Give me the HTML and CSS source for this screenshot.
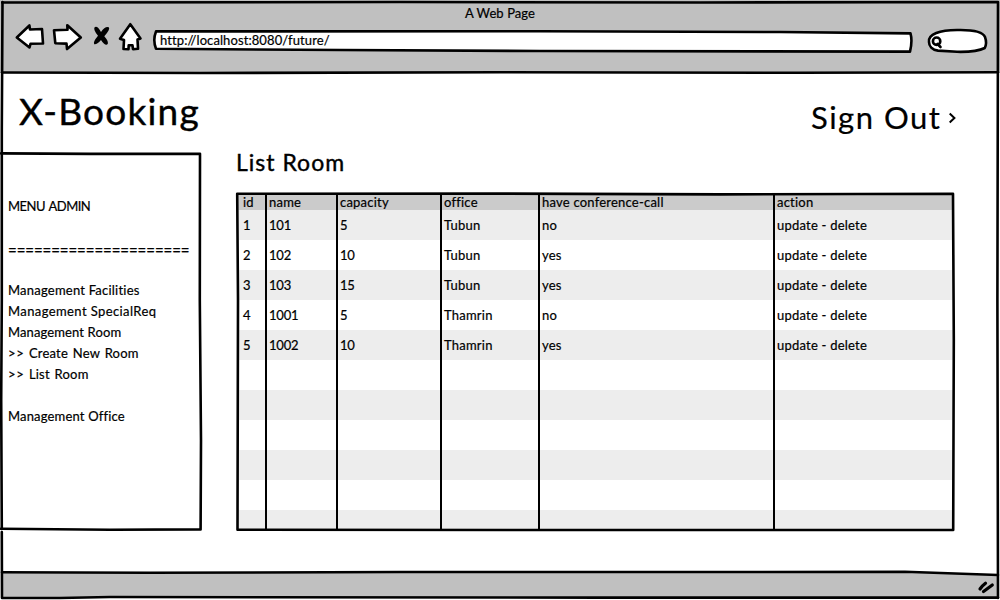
FILE: index.html
```html
<!DOCTYPE html>
<html lang="en">
<head>
<meta charset="utf-8">
<title>A Web Page</title>
<link rel="stylesheet" href="styles.css">
</head>
<body>
<div class="window">
  <header class="chrome">
    <div class="chrome-title">A Web Page</div>
    <div class="toolbar">
      <svg class="nav" width="146" height="40" viewBox="0 20 146 40">
        <g class="ink fill-white">
          <path d="M16.8 37.5L29.4 25.5L30 29.5L42 29L43 43.5L30.5 43.8L29.5 47.5Z"/>
          <path d="M54 30.2L67.5 29.8L67.3 25.2L80.8 37.5L67 49L66.5 43.6L55.3 43.2Z"/>
          <path d="M130.3 24.2L140.5 38.5L137.5 39.5L138 48.8L133 49.2L132.5 45.3L128.7 45.3L128.5 49.2L123.5 49L124 40L120 38.7Z"/>
        </g>
        <path class="cross" d="M94.6 27.2Q97.5 25.5 101 32Q105 26 108.8 27.2Q110.6 29 104.3 36.3Q109.8 42.5 107.2 44.6Q104.5 45.6 101 40Q96.5 45 94.2 44.2Q92.8 42 98 35.8Q93 29.5 94.6 27.2Z"/>
      </svg>
      <div class="address">
        <svg class="backdrop" width="762" height="26" viewBox="152 28 762 26"><path class="ink fill-white" d="M156 31.4L540 31.3L780 32L910.5 33.4Q912.6 41 910 51.6L540 51L340 50L156 48.8Q152.6 40 156 31.4Z"/></svg>
        <span class="url">http://localhost:8080/future/</span>
      </div>
      <svg class="search" width="64" height="28" viewBox="926 27 64 28">
        <path class="ink fill-white" d="M929 42C928 34 940 30.2 957 30C973 29.6 983 32 985 37Q987.2 43 984.8 48C978 51.5 966 52 957 51.8L938 50.6C932 50 929 46 929 42Z"/>
        <circle class="ink fill-none" cx="936.6" cy="41.2" r="3.7"/><path class="ink fill-none" d="M937.5 44L940.5 47"/>
      </svg>
    </div>
  </header>

  <main class="page">
    <aside class="side">
      <h1 class="brand">X-Booking</h1>
      <nav class="menu">
        <div class="caps">MENU ADMIN</div>
        <div class="rule">=====================</div>
        <div>Management Facilities</div>
        <div class="wide">Management SpecialReq</div>
        <div class="tight">Management Room</div>
        <div class="sub">&gt;&gt; Create New Room</div>
        <div class="sub">&gt;&gt; List Room</div>
        <div class="apart">Management Office</div>
      </nav>
    </aside>
    <section class="content">
      <div class="signout"><span>Sign Out</span><svg width="10" height="14" viewBox="947 111 10 14"><path class="chevron" d="M949.7 113.6L954.4 118L949.7 122.4"/></svg></div>
      <h2 class="heading">List Room</h2>
      <div class="table">
        <div class="row head"><span>id</span><span>name</span><span>capacity</span><span>office</span><span>have conference-call</span><span>action</span></div>
        <div class="row"><span>1</span><span>101</span><span>5</span><span>Tubun</span><span>no</span><span>update - delete</span></div>
        <div class="row"><span>2</span><span>102</span><span>10</span><span>Tubun</span><span>yes</span><span>update - delete</span></div>
        <div class="row"><span>3</span><span>103</span><span>15</span><span>Tubun</span><span>yes</span><span>update - delete</span></div>
        <div class="row"><span>4</span><span>1001</span><span>5</span><span>Thamrin</span><span>no</span><span>update - delete</span></div>
        <div class="row"><span>5</span><span>1002</span><span>10</span><span>Thamrin</span><span>yes</span><span>update - delete</span></div>
        <div class="row"></div><div class="row"></div><div class="row"></div><div class="row"></div><div class="row"></div><div class="row last"></div>
      </div>
    </section>
  </main>

  <svg class="sketch" width="1000" height="600" viewBox="0 0 1000 600">
    <path class="status" d="M2 572.5L400 572.5L700 571.8L900 571.8L998 575V598L2 598Z"/>
    <g class="ink fill-none">
      <path d="M2.2 2.5L400 2L700 2.5L998 2L997.4 300L998 598"/>
      <path d="M2.5 2L1.8 130L1.8 300L1.2 400L1.8 529"/>
      <path d="M1.8 532L2 598L60 598L110 597L600 597.6L998 597.6"/>
      <path d="M2 72.5L200 73L500 72.3L800 72.8L998 72.3"/>
      <path d="M2 572.3L150 572.8L400 572L700 572L905 571.8L998 575"/>
      <path d="M1 153.4L90 153.9L200 153.8L199.8 300L201 440L200.6 529.4L110 529.8L1 528.8"/>
      <path d="M237.2 193.8L500 193.6L720 194.4L953 193.8L953.8 340L953.2 530L600 530L237.5 529.8L238 300L237.2 193.8"/>
      <path class="column" d="M266 195V530M337 195V530M441 195V530M539 195V530M774 195V530"/>
    </g>
    <path class="grip" d="M980 589Q982 586 985.5 583.3M983.5 591.5Q989 587.5 992.3 585"/>
  </svg>
</div>
</body>
</html>
```
FILE: styles.css
```css
* { box-sizing: border-box; }
body {
  margin: 0;
  background: #fff;
  color: #000;
  font: 13px/21px Lato, "Open Sans", sans-serif;
  letter-spacing: .22px;
  -webkit-text-stroke: .2px #000;
}
h1, h2 { margin: 0; font-weight: 400; -webkit-text-stroke-width: .4px; }
svg { display: block; -webkit-text-stroke: 0; }

.window { position: relative; width: 1000px; height: 600px; overflow: hidden; }
.chrome { height: 73px; background: #c0c0c0; }
.chrome-title { height: 20px; line-height: 26px; text-align: center; letter-spacing: .08px; }
.toolbar { display: flex; align-items: flex-start; }
.address { display: grid; width: 762px; margin: 8px 12px 0 6px; }
.backdrop, .url { grid-area: 1 / 1; }
.url { padding: 2px 0 0 8px; letter-spacing: .09px; z-index: 1; }
.search { margin-top: 7px; }

.page { display: flex; }
.side { width: 201px; }
.brand { height: 81px; padding: 17px 0 0 19px; font-size: 37px; line-height: 42px; letter-spacing: 1.2px; white-space: nowrap; }
.menu { height: 376px; padding: 42px 0 0 8px; white-space: nowrap; }
.caps { letter-spacing: -.5px; word-spacing: 1px; }
.rule { height: 21px; margin: 21px 0; padding-top: 2px; font-size: 15px; letter-spacing: -.06px; -webkit-text-stroke-width: .3px; }
.wide { letter-spacing: .4px; }
.sub { letter-spacing: .2px; word-spacing: 1.3px; }
.sub::first-letter { letter-spacing: .8px; }
.tight { letter-spacing: .12px; }
.apart { margin-top: 21px; letter-spacing: .17px; }

.content { width: 717px; margin-left: 36px; }
.signout { display: flex; height: 74px; padding: 24px 0 0 574px; font-size: 31px; line-height: 40px; letter-spacing: 1.5px; white-space: nowrap; }
.signout svg { margin: 14px 0 0 auto; transform: translateX(3px); }
.heading { height: 46px; font-size: 23px; line-height: 30px; letter-spacing: 1px; margin-left: -1px; }
.table { height: 337px; padding-left: 1px; }
.row { display: grid; grid-template-columns: 28px 71px 104px 98px 235px 180px; height: 30px; line-height: 30px; white-space: nowrap; }
.row:nth-child(even) { background: #ededed; }
.row span { padding-left: 3px; }
.row span:first-child { padding-left: 5px; }
.row:not(.head) span:nth-child(-n+3) { letter-spacing: -.2px; }
.row.head { height: 17px; padding-top: 2px; line-height: 15px; background: #cbcbcb; }
.row.last { height: 20px; }

.sketch { position: absolute; inset: 0; pointer-events: none; }
.ink { stroke: #000; stroke-width: 2.6; stroke-linejoin: round; stroke-linecap: round; }
.fill-white { fill: #fff; }
.fill-none { fill: none; }
.column { stroke-width: 2; }
.status { fill: #c0c0c0; }
.cross { fill: #000; }
.chevron { fill: none; stroke: #000; stroke-width: 2; }
.grip { fill: none; stroke: #000; stroke-width: 3.2; stroke-linecap: round; }
```
